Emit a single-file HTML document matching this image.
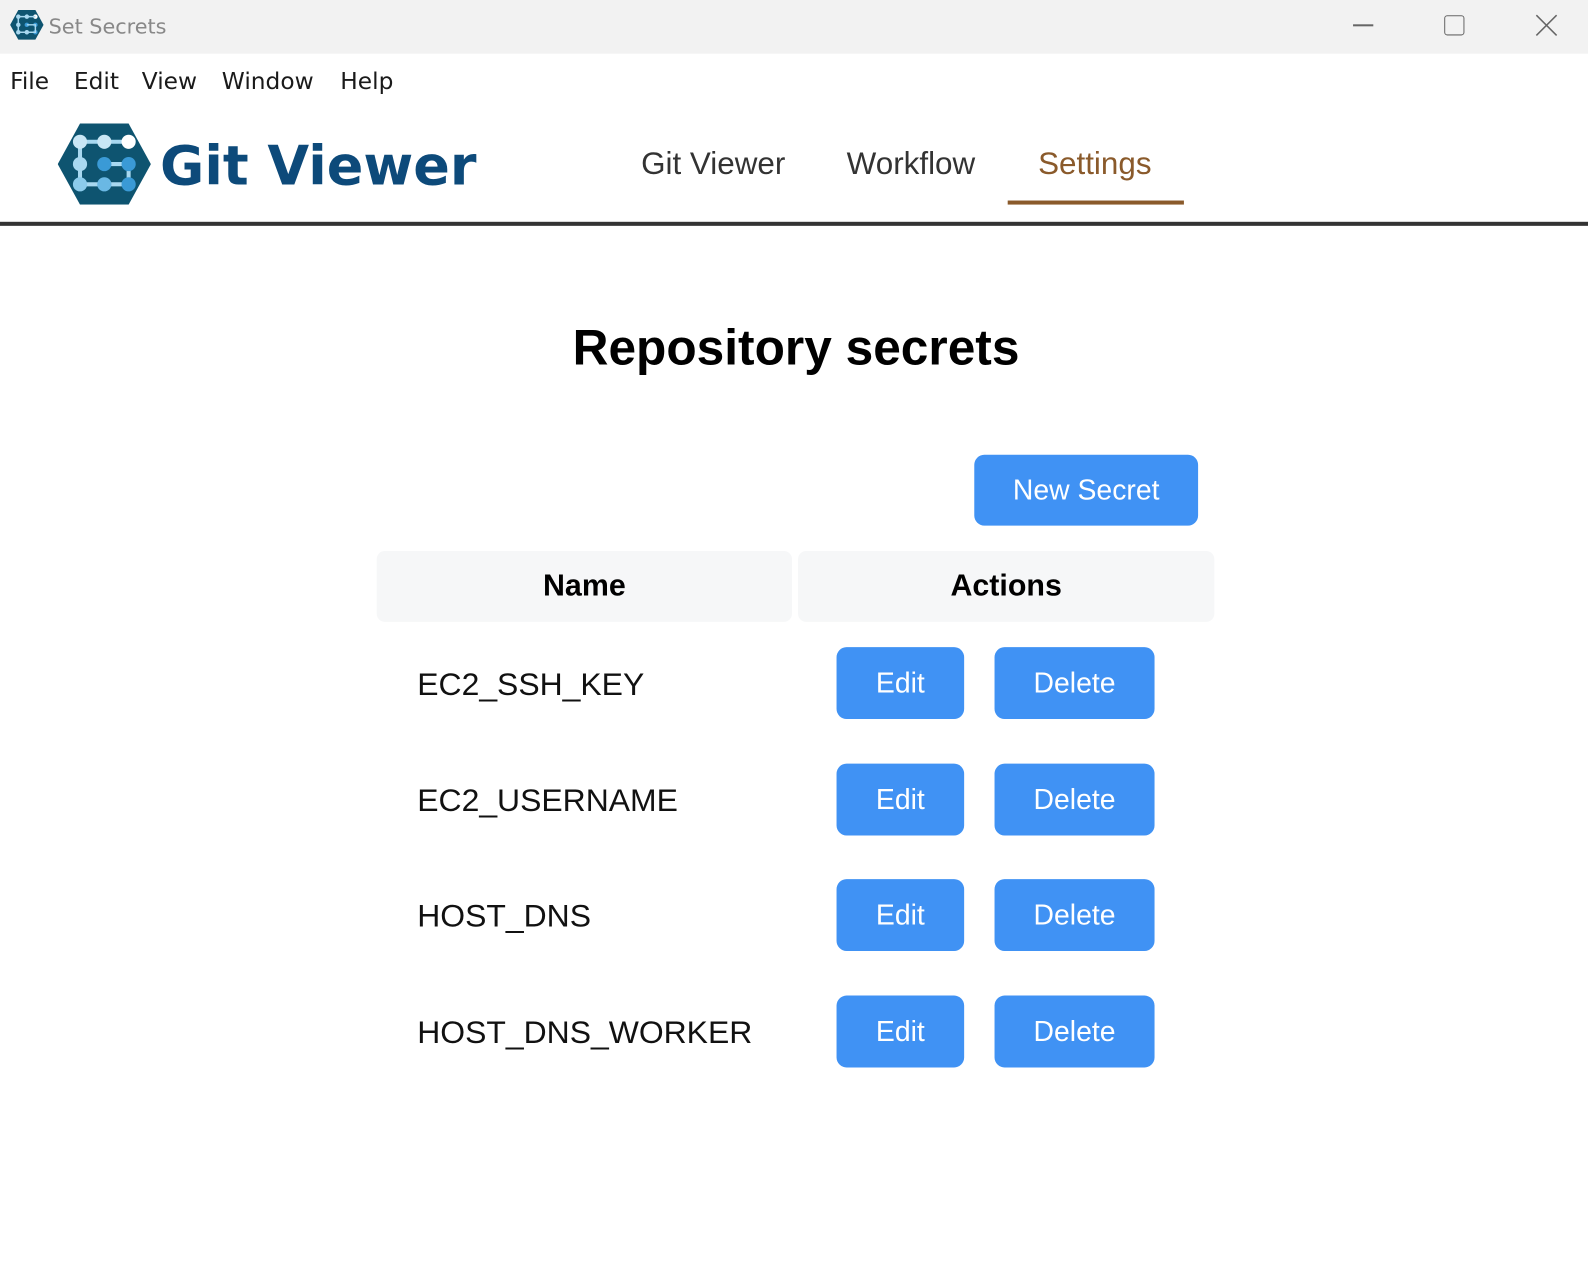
<!DOCTYPE html>
<html><head><meta charset="utf-8"><style>
*{margin:0;padding:0;box-sizing:border-box}
html,body{width:1588px;height:1276px;background:#fff;overflow:hidden}
#w{position:relative;width:1568px;height:1260px;transform:scale(1.01276);transform-origin:0 0;font-family:"Liberation Sans",Arial,sans-serif}
.a{position:absolute;white-space:nowrap}
.tb{left:0;top:0;width:1580px;height:53px;background:#f2f2f2}
.menu{font-family:"DejaVu Sans","Liberation Sans",sans-serif;font-size:23px;color:#1a1a1a;top:68px}
.nav{font-size:31px;color:#333;top:144px}
.btn{background:#4092f4;color:#fff;border-radius:10px;font-size:28px;display:flex;align-items:center;justify-content:center;height:71px}
.th{background:#f6f7f8;border-radius:8px;top:544px;height:70px;font-weight:bold;font-size:30px;display:flex;align-items:center;justify-content:center;color:#000}
.nm{font-size:31.5px;color:#111;left:412px}
</style></head><body><div id="w">
<div class="a tb"></div>
<svg class="a" style="left:10px;top:9px" width="33" height="31" viewBox="0 0 90 80"><polygon points="22,0 68,0 90,40 68,80 22,80 0,40" fill="#0e5470"/><g fill="#a8d8f0"><circle cx="22" cy="18" r="6"/><circle cx="45" cy="18" r="6"/><circle cx="68" cy="18" r="6" fill="#fff"/><circle cx="22" cy="40" r="6"/><circle cx="45" cy="40" r="6" fill="#3a9ad6"/><circle cx="68" cy="40" r="6" fill="#3a9ad6"/><circle cx="22" cy="60" r="6"/><circle cx="45" cy="60" r="6"/><circle cx="68" cy="60" r="6" fill="#3a9ad6"/></g><path d="M22 18H68M22 18V60H68V40H45" stroke="#a8d8f0" stroke-width="4" fill="none"/></svg>
<div class="a" style="left:48px;top:14px;font-family:'DejaVu Sans',sans-serif;font-size:20.5px;color:#888">Set Secrets</div>
<div class="a" style="left:1336px;top:24px;width:20px;height:1.5px;background:#666"></div>
<div class="a" style="left:1426px;top:15px;width:20px;height:20px;border:1.5px solid #666;border-radius:3px"></div>
<svg class="a" style="left:1516px;top:14px" width="22" height="22"><path d="M1 1L21 21M21 1L1 21" stroke="#666" stroke-width="1.5"/></svg>
<div class="a menu" style="left:10px">File</div>
<div class="a menu" style="left:73px">Edit</div>
<div class="a menu" style="left:140px">View</div>
<div class="a menu" style="left:219px">Window</div>
<div class="a menu" style="left:336px">Help</div>
<svg class="a" style="left:57px;top:122px" width="92" height="80" viewBox="0 0 92 80"><polygon points="22,0 70,0 92,40 70,80 22,80 0,40" fill="#0e5470"/><path d="M22 18H70M22 18V60H70V40H46" stroke="#a8d8f0" stroke-width="4" fill="none"/><g fill="#a8d8f0"><circle cx="22" cy="18" r="7" fill="#c8e6f5"/><circle cx="46" cy="18" r="7" fill="#c8e6f5"/><circle cx="70" cy="18" r="7" fill="#fff"/><circle cx="22" cy="40" r="7"/><circle cx="46" cy="40" r="7" fill="#3a9ad6"/><circle cx="70" cy="40" r="7" fill="#3a9ad6"/><circle cx="22" cy="60" r="7" fill="#8ccbeb"/><circle cx="46" cy="60" r="7" fill="#6ab8e4"/><circle cx="70" cy="60" r="7" fill="#3a9ad6"/></g></svg>
<div class="a" style="left:158px;top:133px;font-family:'DejaVu Sans',sans-serif;font-weight:bold;font-size:53.3px;color:#0d4a7a">Git Viewer</div>
<div class="a nav" style="left:633px">Git Viewer</div>
<div class="a nav" style="left:836px">Workflow</div>
<div class="a nav" style="left:1025px;color:#8a5a2b">Settings</div>
<div class="a" style="left:995px;top:198px;width:174px;height:4px;background:#8a5a2b"></div>
<div class="a" style="left:0;top:219px;width:1568px;height:4px;background:#333"></div>
<div class="a" style="left:0;width:1572px;top:316px;text-align:center;font-weight:bold;font-size:49px;color:#000">Repository secrets</div>
<div class="a btn" style="left:962px;top:449px;width:221px;height:70px">New Secret</div>
<div class="a th" style="left:372px;width:410px">Name</div>
<div class="a th" style="left:788px;width:411px">Actions</div>
<div class="a nm" style="top:657px">EC2_SSH_KEY</div>
<div class="a btn" style="left:826px;top:639px;width:126px">Edit</div>
<div class="a btn" style="left:982px;top:639px;width:158px">Delete</div>
<div class="a nm" style="top:772px">EC2_USERNAME</div>
<div class="a btn" style="left:826px;top:754px;width:126px">Edit</div>
<div class="a btn" style="left:982px;top:754px;width:158px">Delete</div>
<div class="a nm" style="top:886px">HOST_DNS</div>
<div class="a btn" style="left:826px;top:868px;width:126px">Edit</div>
<div class="a btn" style="left:982px;top:868px;width:158px">Delete</div>
<div class="a nm" style="top:1001px">HOST_DNS_WORKER</div>
<div class="a btn" style="left:826px;top:983px;width:126px">Edit</div>
<div class="a btn" style="left:982px;top:983px;width:158px">Delete</div>
</div></body></html>
